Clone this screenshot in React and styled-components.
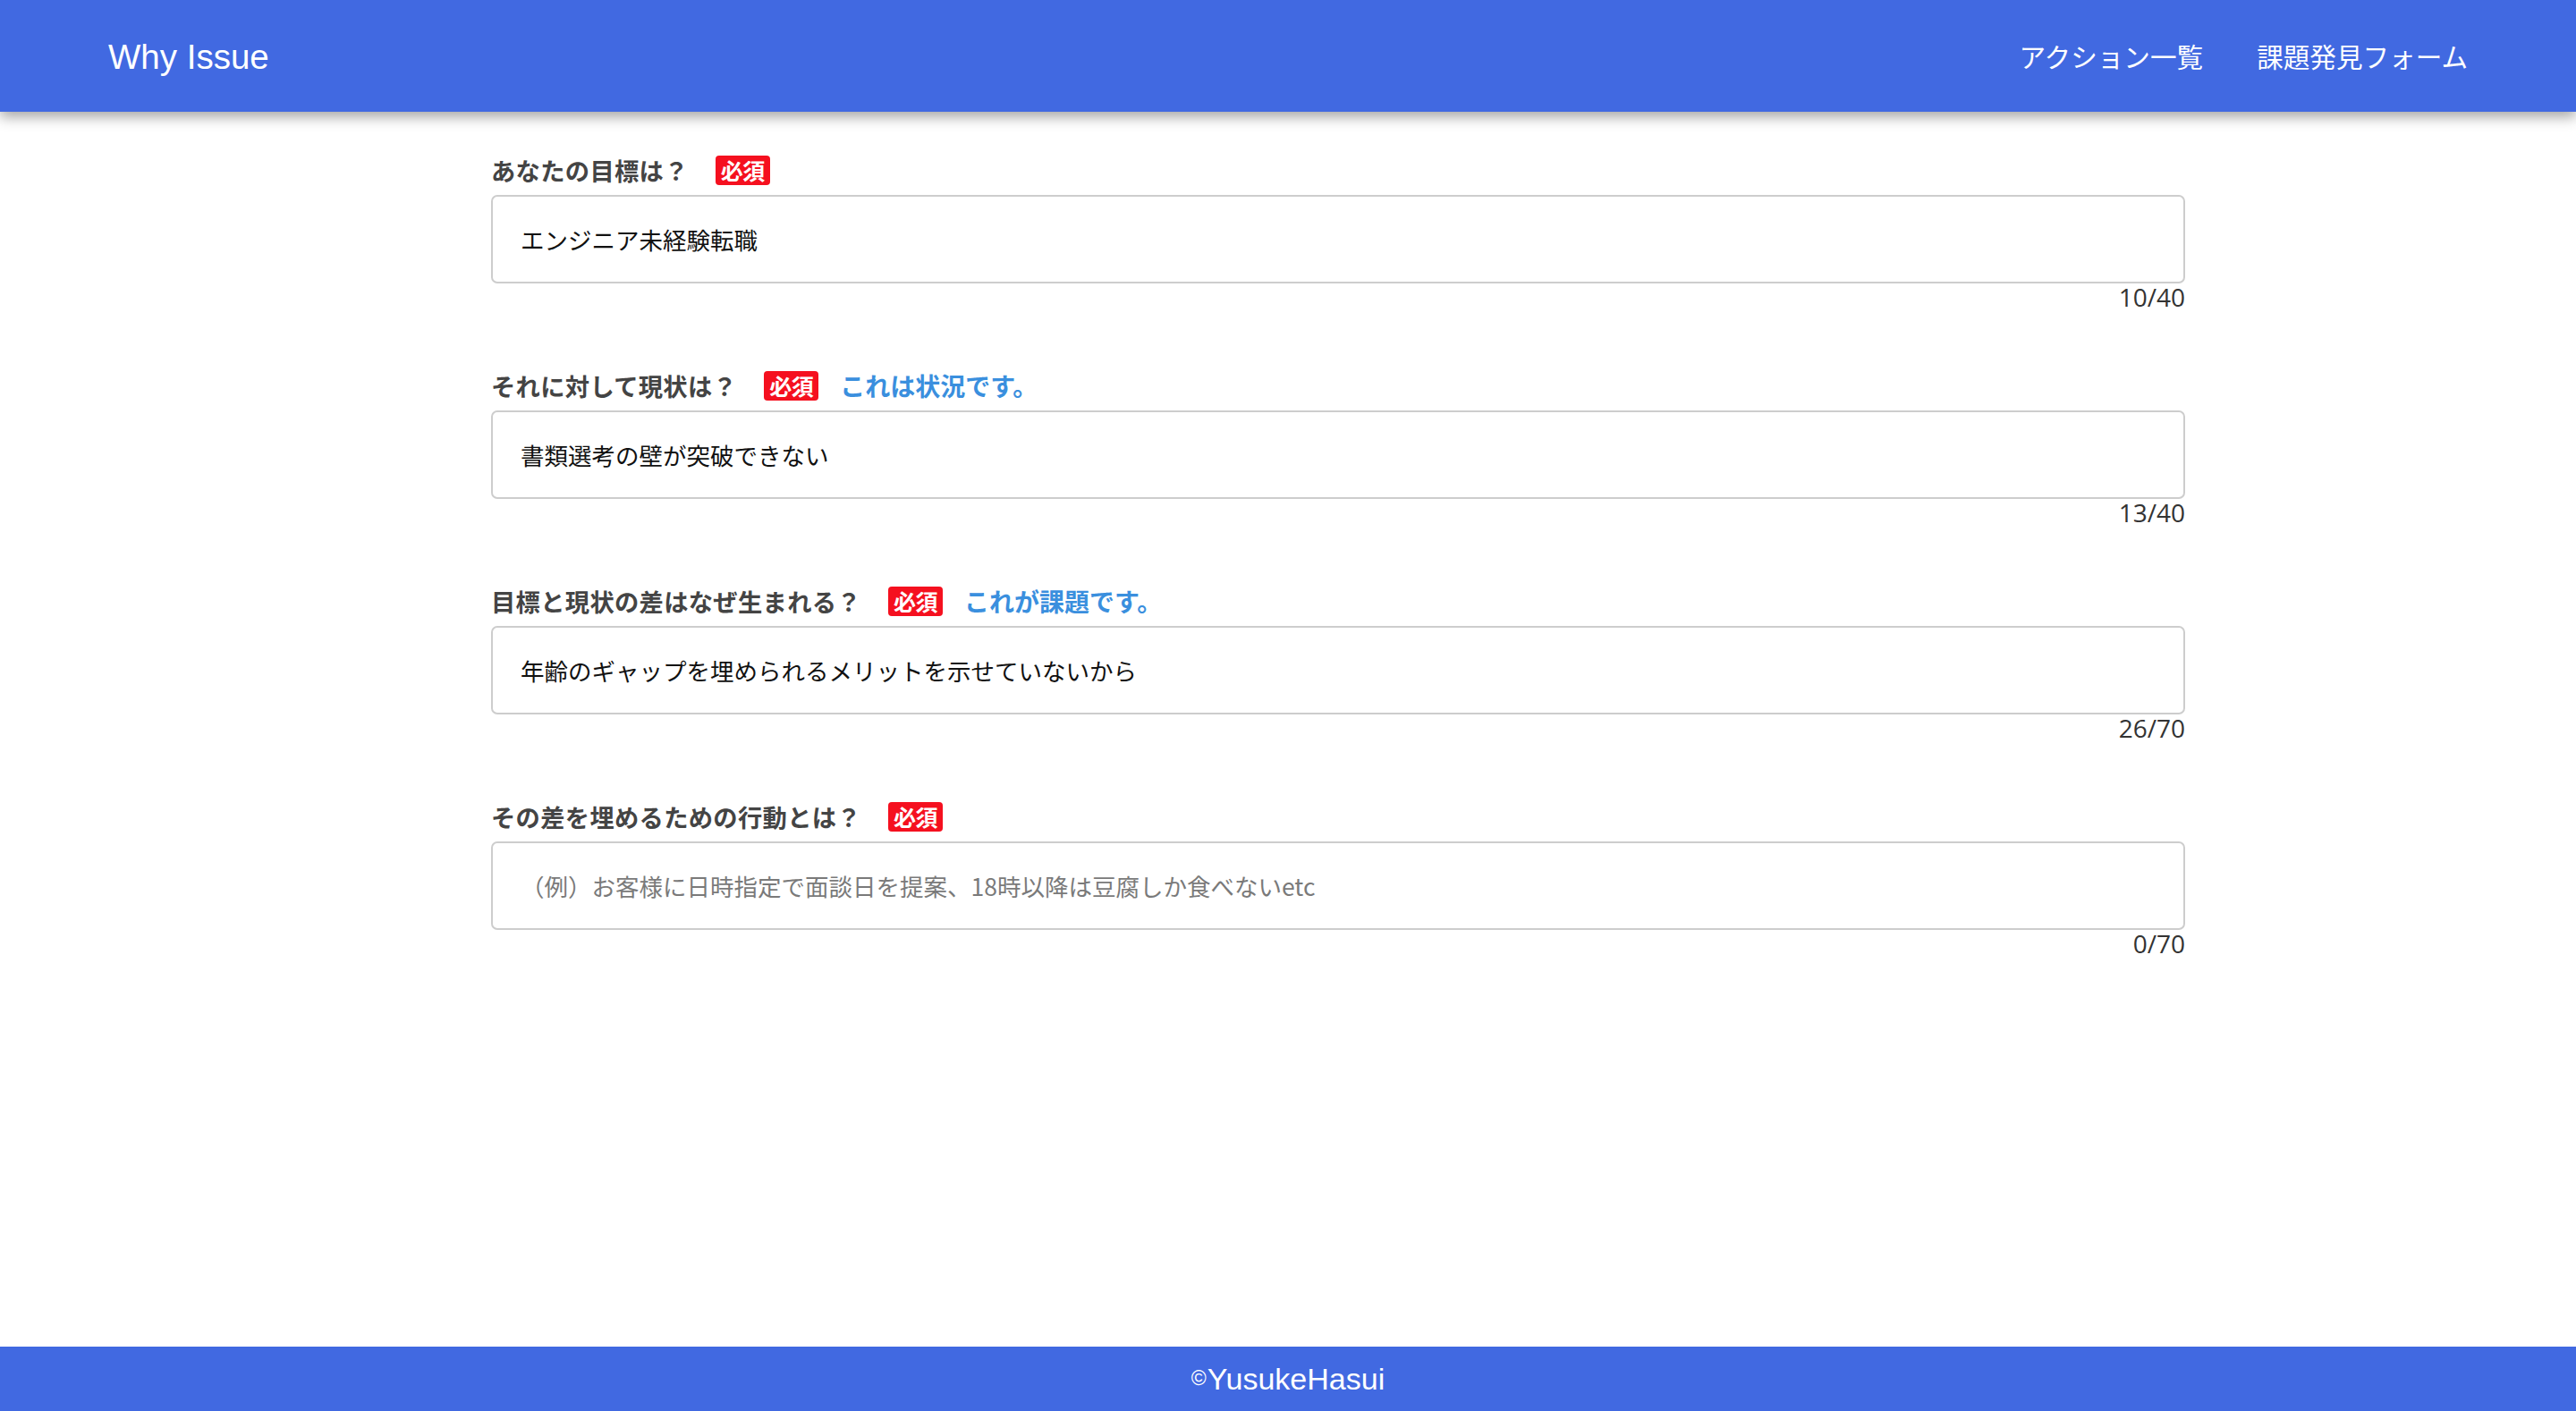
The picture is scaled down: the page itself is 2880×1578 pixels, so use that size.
import React, { useState } from "react";
import styled, { createGlobalStyle } from "styled-components";

const GlobalStyle = createGlobalStyle`
  html, body {
    margin: 0;
    padding: 0;
    background: #fff;
  }
  body {
    font-family: "Noto Sans CJK JP", "Liberation Sans", sans-serif;
  }
  * {
    box-sizing: border-box;
  }
`;

const Page = styled.div`
  min-height: 100vh;
  display: flex;
  flex-direction: column;
`;

const Header = styled.header`
  height: 125px;
  flex-shrink: 0;
  background: #4169e1;
  display: flex;
  align-items: center;
  justify-content: space-between;
  padding: 0 121px;
  box-shadow: 0 6px 14px rgba(0, 0, 0, 0.35);
  position: relative;
  z-index: 1;
`;

const Brand = styled.a`
  color: #fff;
  font-family: "Liberation Sans", Arial, sans-serif;
  font-size: 38.5px;
  text-decoration: none;
  margin-top: 2px;
`;

const Nav = styled.nav`
  display: flex;
  gap: 60px;
`;

const NavLink = styled.a`
  color: #fff;
  font-family: "Noto Sans CJK JP", sans-serif;
  font-size: 29.6px;
  text-decoration: none;
`;

const Main = styled.main`
  flex: 1;
  padding: 49px 0 0 549px;
`;

const Form = styled.form`
  width: 1894px;
  display: flex;
  flex-direction: column;
  gap: 66px;
`;

const Field = styled.div`
  display: flex;
  flex-direction: column;
`;

const LabelRow = styled.div`
  height: 32px;
  display: flex;
  align-items: center;
  margin-bottom: 12px;
`;

const Label = styled.label`
  color: #444;
  font-weight: 700;
  font-size: 27.3px;
  letter-spacing: 0.3px;
`;

const Required = styled.span`
  margin-left: 30px;
  height: 33px;
  padding: 0 6px;
  display: inline-flex;
  align-items: center;
  background: #f5101f;
  color: #fff;
  border-radius: 4px;
  font-weight: 700;
  font-size: 25px;
  letter-spacing: -0.5px;
`;

const Hint = styled.span`
  margin-left: 24px;
  color: #3a8fde;
  font-weight: 700;
  font-size: 28px;
`;

const Input = styled.input`
  height: 99px;
  width: 100%;
  border: 2px solid #cdcdcd;
  border-radius: 7px;
  padding: 0 31px;
  font-family: "Noto Sans CJK JP", "Liberation Sans", sans-serif;
  font-size: 26.5px;
  color: #111;
  outline: none;
  background: #fff;

  &::placeholder {
    color: #7a7a7a;
  }
`;

const Counter = styled.div`
  text-align: right;
  height: 32px;
  line-height: 30px;
  color: #333;
  font-family: "Open Sans", "Liberation Sans", sans-serif;
  font-size: 28px;
`;

const Footer = styled.footer`
  height: 72px;
  flex-shrink: 0;
  background: #4169e1;
  display: flex;
  align-items: center;
  justify-content: center;
  color: #fff;
  font-family: "Liberation Sans", Arial, sans-serif;
  font-size: 34px;
`;

const Copy = styled.span`
  font-size: 23px;
  margin-right: 1px;
  position: relative;
  top: -1px;
`;

const fields = [
  {
    label: "あなたの目標は？",
    value: "エンジニア未経験転職",
    max: 40,
  },
  {
    label: "それに対して現状は？",
    hint: "これは状況です。",
    value: "書類選考の壁が突破できない",
    max: 40,
  },
  {
    label: "目標と現状の差はなぜ生まれる？",
    hint: "これが課題です。",
    value: "年齢のギャップを埋められるメリットを示せていないから",
    max: 70,
  },
  {
    label: "その差を埋めるための行動とは？",
    value: "",
    placeholder: "（例）お客様に日時指定で面談日を提案、18時以降は豆腐しか食べないetc",
    max: 70,
  },
];

const FormField = ({ label, hint, value, placeholder, max }) => {
  const [text, setText] = useState(value);
  return (
    <Field>
      <LabelRow>
        <Label>{label}</Label>
        <Required>必須</Required>
        {hint && <Hint>{hint}</Hint>}
      </LabelRow>
      <Input
        value={text}
        placeholder={placeholder}
        maxLength={max}
        onChange={(e) => setText(e.target.value)}
      />
      <Counter>
        {text.length}/{max}
      </Counter>
    </Field>
  );
};

const App = () => {
  return (
    <Page>
      <GlobalStyle />
      <Header>
        <Brand href="#">Why Issue</Brand>
        <Nav>
          <NavLink href="#">アクション一覧</NavLink>
          <NavLink href="#">課題発見フォーム</NavLink>
        </Nav>
      </Header>
      <Main>
        <Form onSubmit={(e) => e.preventDefault()}>
          {fields.map((f) => (
            <FormField key={f.label} {...f} />
          ))}
        </Form>
      </Main>
      <Footer>
        <Copy>©</Copy>YusukeHasui
      </Footer>
    </Page>
  );
};

export default App;
